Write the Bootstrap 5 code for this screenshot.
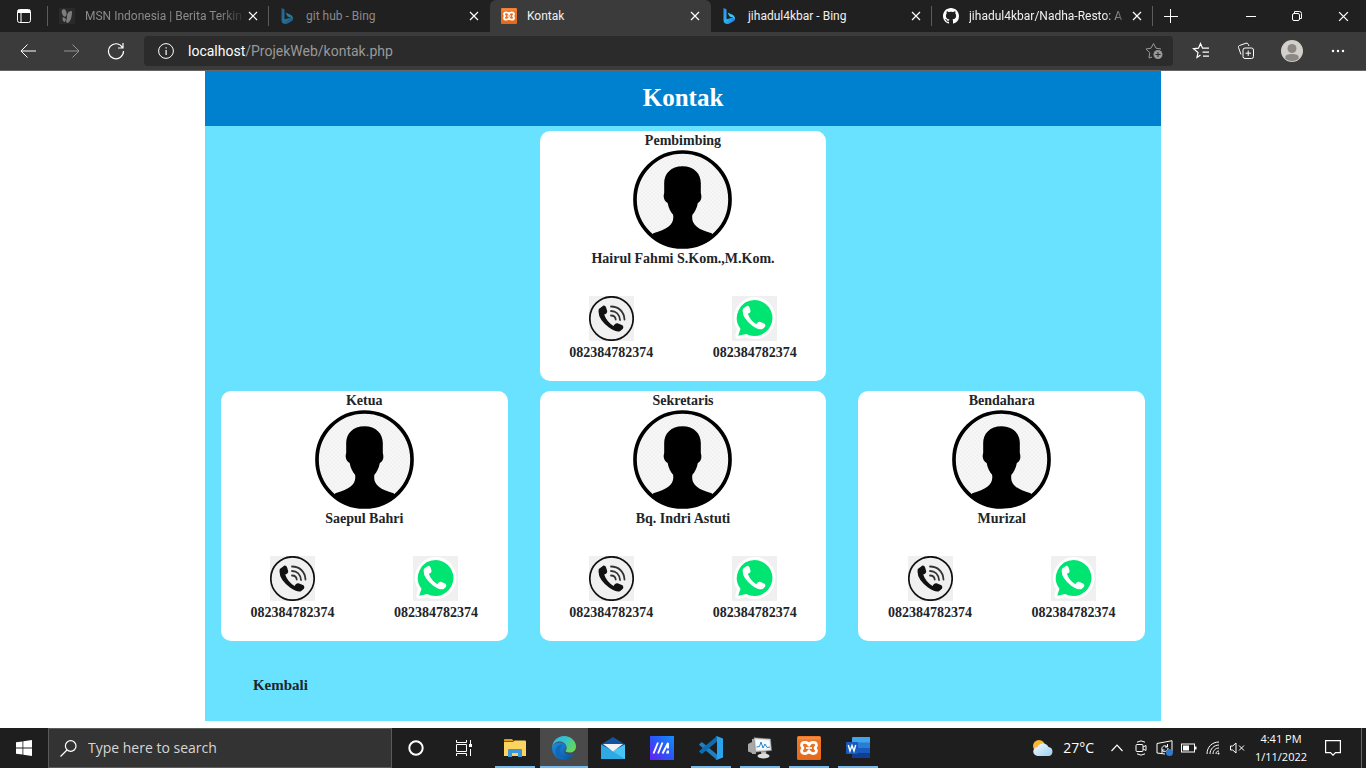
<!DOCTYPE html>
<html lang="id">
<head>
<meta charset="utf-8">
<meta name="viewport" content="width=device-width, initial-scale=1">
<title>Kontak</title>
<link href="https://cdn.jsdelivr.net/npm/bootstrap@5.3.0/dist/css/bootstrap.min.css" rel="stylesheet">
<style>
  body { font-family: "Open Sans", "Noto Sans", sans-serif; font-size: 12px; line-height: 16px; background: #fff; }
  svg { display: block; flex: none; }
  button { border: 0; background: none; padding: 0; color: inherit; }
  .ln { fill: none; stroke: currentColor; }

  /* browser tabs */
  .tabstrip { background: #202020; height: 32px; color: #fff; font-family: Roboto, "Open Sans", sans-serif; }
  .tab-menu { width: 48px; }
  .web-tab { flex: 0 1 221px; min-width: 0; padding-left: 11px; padding-right: 8px; gap: 10px; }
  .web-tab a { color: #f0f0f0; text-decoration: none; }
  .web-tab.asleep a { color: #8a8a8a; }
  .web-tab.asleep svg.fav { opacity: .55; }
  .web-tab.current { background: #3b3b3b; border-radius: 6px 6px 0 0; }
  .web-tab .tab-title { white-space: nowrap; flex: 1 1 0; min-width: 0; }
  .web-tab .faded { -webkit-mask-image: linear-gradient(90deg, #000 86%, rgba(0,0,0,.2)); mask-image: linear-gradient(90deg, #000 86%, rgba(0,0,0,.2)); }
  .tab-rule { width: 1px; height: 20px; background: #5c5c5c; margin-left: -1px; }
  .tab-close { width: 16px; height: 16px; margin-left: -6px; }
  .new-tab { width: 36px; }
  .win-btn { width: 46px; }

  /* address row */
  .toolbar { background: #3b3b3b; height: 39px; border-bottom: 1px solid #666; color: #fff; padding-left: 6px; padding-right: 5px; }
  .tool-btn { width: 44px; height: 30px; }
  .tool-btn.end { width: 46px; }
  .address { background: #2b2b2b; border-radius: 4px; height: 30px; margin: 0 4px 0 6px; padding: 0 10px 0 14px; gap: 14px; }
  .address .url { font-family: Roboto, "Open Sans", sans-serif; font-size: 14px; color: #999; }
  .address .host { color: #fff; }

  /* contact page */
  .page { width: 70%; background: #69e2ff; font-family: "Liberation Serif", "Times New Roman", serif; font-weight: 700; font-size: 14px; line-height: 18px; color: #212529; }
  .page-head { background: #0081cf; color: #fff; height: 55px; font-size: 25px; line-height: 53px; font-weight: 700; }
  .people { --bs-gutter-x: 32px; margin: 0; padding-top: 5px; }
  .people > div { margin-bottom: 10px; }
  .person { background: #fff; border-radius: 10px; min-height: 250px; padding-top: 1px; }
  .person h2, .person p { font-size: 14px; line-height: 18px; font-weight: 700; margin: 0; }
  .person p { line-height: 20px; }
  .reach { margin-top: 27px; }
  .reach a { color: inherit; text-decoration: none; line-height: 24px; }
  .back-row { height: 70px; padding: 25px 48px; font-size: 15px; }
  .back-row a { color: #212529; text-decoration: none; }

  /* taskbar */
  .taskbar { background: #1e1e1e; height: 40px; color: #fff; }
  .task-btn { width: 48px; height: 40px; }
  .find { width: 344px; height: 40px; background: #333; border: 1px solid #5b5b5b; padding-left: 11px; gap: 11px; }
  .find input { background: none; border: 0; outline: 0; padding: 0; color: #d6d6d6; font-size: 14px; line-height: 20px; min-width: 0; }
  .find input::placeholder { color: #d6d6d6; opacity: 1; }
  .apps { margin-left: 3px; gap: 1px; }
  .open-app { background: linear-gradient(#76b9ed, #76b9ed) center bottom / 40px 2px no-repeat; }
  .open-app.front { background-color: #4a4a4a; background-size: 48px 2px; }
  .weather { font-size: 14px; gap: 9px; margin-right: 11px; }
  .tray-btn { width: 24px; height: 40px; }
  .clock { width: 64px; font-size: 11px; line-height: 18px; }
  .notes { width: 40px; margin-right: 8px; }
  .peek { width: 5px; height: 40px; border-left: 1px solid #666; }
</style>
</head>
<body class="d-flex flex-column min-vh-100">

<svg width="0" height="0" class="position-absolute" aria-hidden="true">
  <defs>
    <linearGradient id="gBing" x1="0" y1="0" x2="1" y2="1"><stop offset="0" stop-color="#2b8cf0"/><stop offset=".5" stop-color="#2bb4f2"/><stop offset="1" stop-color="#1f6fe0"/></linearGradient>
    <linearGradient id="gOrange" x1="0" y1="0" x2="0" y2="1"><stop offset="0" stop-color="#ee7a2a"/><stop offset="1" stop-color="#e5681a"/></linearGradient>
    <linearGradient id="gEdgeTop" x1="0" y1="0" x2="1" y2=".5"><stop offset="0" stop-color="#2fb4ea"/><stop offset=".5" stop-color="#35c1d0"/><stop offset="1" stop-color="#63d85a"/></linearGradient>
    <linearGradient id="gEdgeLow" x1="0" y1="0" x2="1" y2="1"><stop offset="0" stop-color="#1b8fe0"/><stop offset="1" stop-color="#0c4f9c"/></linearGradient>
    <linearGradient id="gMa" x1="0" y1="1" x2="1" y2="0"><stop offset="0" stop-color="#6a1cf5"/><stop offset=".5" stop-color="#2b55f8"/><stop offset="1" stop-color="#1290ff"/></linearGradient>
    <linearGradient id="gCloud" x1="0" y1="0" x2="1" y2="1"><stop offset="0" stop-color="#f4fbff"/><stop offset="1" stop-color="#9dcff2"/></linearGradient>
    <pattern id="checks" width="4" height="4" patternUnits="userSpaceOnUse"><rect width="4" height="4" fill="#f8f8f8"/><path d="M0 0h2v2H0zM2 2h2v2H2z" fill="#f0f0f0"/></pattern>
    <clipPath id="round"><circle cx="50" cy="50" r="48"/></clipPath>
  </defs>
  <symbol id="x" viewBox="0 0 10 10"><path class="ln" stroke-width="1.200" d="M1 1l8 8M9 1L1 9"/></symbol>
  <symbol id="bing" viewBox="0 0 16 16"><path fill="url(#gBing)" d="M1.500 0l3 1.200v10L13 9v2c0 1-.5 1.700-1.300 2.200L7 15.700c-3 1-5.500-.7-5.500-3.700z"/><path fill="#35c8f4" d="M5.500 4.500l4.500 2c2 .9 2.700 2 2.700 4v1c-.6-1.400-1.500-1.800-2.700-2.300L7.500 8.400z"/></symbol>
  <symbol id="xampp" viewBox="0 0 24 24"><rect width="24" height="24" rx="1.500" fill="url(#gOrange)"/><path d="M1 1h22v2.500H1z" fill="#f29a5d" opacity=".6"/><path fill="none" stroke="#fff" stroke-width="2.700" stroke-linejoin="round" d="M12 9.300C11 5.600 4.700 5.400 4.500 9.200c0 1.600 1.500 1.800 1.500 2.800s-1.500 1.200-1.500 2.800c.2 3.800 6.500 3.600 7.500-.1 1 3.700 7.300 3.900 7.500.1 0-1.600-1.500-1.800-1.500-2.800s1.500-1.200 1.500-2.800C19.300 5.400 13 5.600 12 9.300z"/><path fill="none" stroke="#fff" stroke-width="1.800" d="M9 12h6"/></symbol>
  <symbol id="avatar" viewBox="0 0 100 100"><circle cx="50" cy="50" r="48" fill="url(#checks)"/><g clip-path="url(#round)"><path d="M50 16.500c-12 0-19 8-18.500 18v9c-1.500 5 .3 8 3.500 10 1 5.500 3 9 5.500 12 1.500 9-5 14.500-20 18.500L14 100h72l-6.500-16c-15-4-21-9.500-19.500-18.500 2.500-3 4.500-6.500 5.500-12 3-2 4.500-5 3-10v-9c.5-10-6.500-18-18.500-18z"/></g><circle cx="50" cy="50" r="48" fill="none" stroke="#000" stroke-width="3.700"/></symbol>
  <symbol id="handset" viewBox="0 0 45 45"><path d="M9.800 13l4.700-3.500q2-.2 2.700 2.300l1 3.500q.2 2.200-3 3.200Q17.500 25.500 24.500 30q1.500-3.300 4-2.700l5 2q1.700 1.500.4 3.500L31 35.300Q27 36.400 20 31.500 9.500 23.500 9.500 15.500z"/></symbol>
  <symbol id="call" viewBox="0 0 45 45"><rect width="45" height="45" fill="#f0f0f0"/><circle cx="22.500" cy="22.500" r="21.700" fill="none" stroke="#111" stroke-width="1.700"/><use href="#handset" width="45" height="45" fill="#111"/><path fill="none" stroke="#333" stroke-width="1.800" stroke-linecap="round" d="M22 10.500c7.500 0 13 5 13.500 13M22 15c5 0 8.500 3.500 9 9M22 19.500c3 0 4.500 2 4.700 4"/></symbol>
  <symbol id="wa" viewBox="0 0 45 45"><rect width="45" height="45" fill="#f0f0f0"/><path fill="#00e472" stroke="#fff" stroke-width="6" stroke-linejoin="round" d="M22.700 4a18 18 0 1 1-8.500 34L6.200 39.800l2.300-7A18 18 0 0 1 22.700 4z"/><path fill="#00e472" d="M22.700 4a18 18 0 1 1-8.500 34L6.200 39.800l2.300-7A18 18 0 0 1 22.700 4z"/><use href="#handset" x="2" y="1" width="41" height="41" fill="#fff"/></symbol>
</svg>

<header>
  <nav class="tabstrip d-flex align-items-center" aria-label="Tab">
    <button class="tab-menu d-flex justify-content-center" aria-label="Menu tab"><svg width="16" height="16" viewBox="0 0 16 16"><rect class="ln" x="1.500" y="1.500" width="13" height="13" rx="2"/><path fill="currentColor" d="M2 2h12v3H2z"/><path class="ln" d="M5 5v9"/></svg></button>
    <div class="tab-rule"></div>
    <div class="web-tab asleep d-flex align-items-center h-100">
      <svg class="fav" width="16" height="16" viewBox="0 0 16 16"><rect width="16" height="16" fill="#333"/><path fill="#ccc" d="M3 2c3-2 5 1 4.500 5L6 9C4 8 2 5 3 2zM13 3c-4 0-5 3-5 6l-1 5 2 1c3-2 4-7 4-12zM4 9l3 2-1 3c-2 0-3-3-2-5z"/></svg>
      <a class="tab-title faded" href="#">MSN Indonesia | Berita Terkin</a>
      <button class="tab-close d-flex align-items-center justify-content-center" aria-label="Tutup"><svg width="10" height="10"><use href="#x"/></svg></button>
    </div>
    <div class="tab-rule"></div>
    <div class="web-tab asleep d-flex align-items-center h-100">
      <svg class="fav" width="16" height="16"><use href="#bing"/></svg>
      <a class="tab-title" href="#">git hub - Bing</a>
      <button class="tab-close d-flex align-items-center justify-content-center" aria-label="Tutup"><svg width="10" height="10"><use href="#x"/></svg></button>
    </div>
    <div class="web-tab current d-flex align-items-center h-100">
      <svg class="fav" width="16" height="16"><use href="#xampp"/></svg>
      <a class="tab-title" href="#" aria-current="page">Kontak</a>
      <button class="tab-close d-flex align-items-center justify-content-center" aria-label="Tutup"><svg width="10" height="10"><use href="#x"/></svg></button>
    </div>
    <div class="web-tab d-flex align-items-center h-100">
      <svg class="fav" width="16" height="16"><use href="#bing"/></svg>
      <a class="tab-title" href="#">jihadul4kbar - Bing</a>
      <button class="tab-close d-flex align-items-center justify-content-center" aria-label="Tutup"><svg width="10" height="10"><use href="#x"/></svg></button>
    </div>
    <div class="tab-rule"></div>
    <div class="web-tab d-flex align-items-center h-100">
      <svg class="fav" width="16" height="16" viewBox="0 0 16 16"><path fill="#fff" d="M8 0C3.580 0 0 3.580 0 8c0 3.540 2.290 6.530 5.470 7.590.4.070.55-.17.55-.38 0-.19-.01-.82-.01-1.490-2.010.37-2.530-.49-2.690-.94-.09-.23-.48-.94-.82-1.130-.28-.15-.68-.52-.01-.53.63-.01 1.080.58 1.230.82.72 1.210 1.870.87 2.330.66.07-.52.28-.87.51-1.070-1.780-.2-3.640-.89-3.640-3.950 0-.87.31-1.590.82-2.150-.08-.2-.36-1.020.08-2.120 0 0 .67-.21 2.200.82.64-.18 1.320-.27 2-.27.68 0 1.360.09 2 .27 1.530-1.040 2.200-.82 2.200-.82.44 1.100.16 1.920.08 2.120.51.56.82 1.270.82 2.150 0 3.070-1.870 3.750-3.650 3.950.29.25.54.73.54 1.480 0 1.070-.01 1.930-.01 2.200 0 .21.15.46.55.38A8.010 8.010 0 0 0 16 8c0-4.420-3.580-8-8-8z"/></svg>
      <a class="tab-title faded" href="#">jihadul4kbar/Nadha-Resto: A</a>
      <button class="tab-close d-flex align-items-center justify-content-center" aria-label="Tutup"><svg width="10" height="10"><use href="#x"/></svg></button>
    </div>
    <div class="tab-rule"></div>
    <button class="new-tab d-flex justify-content-center" aria-label="Tab baru"><svg width="14" height="14" viewBox="0 0 14 14"><path class="ln" d="M6.500 0v14M0 7.500h14"/></svg></button>
    <button class="win-btn d-flex justify-content-center ms-auto" aria-label="Perkecil"><svg width="10" height="10" viewBox="0 0 10 10"><path class="ln" d="M0 5.500h10"/></svg></button>
    <button class="win-btn d-flex justify-content-center" aria-label="Pulihkan"><svg width="10" height="10" viewBox="0 0 10 10"><rect class="ln" x=".5" y="2.500" width="7" height="7" rx="1.500"/><path class="ln" d="M2.500 2V.5h5a2 2 0 0 1 2 2v5H8"/></svg></button>
    <button class="win-btn d-flex justify-content-center" aria-label="Tutup jendela"><svg width="11" height="11"><use href="#x"/></svg></button>
  </nav>

  <div class="toolbar d-flex align-items-center">
    <button class="tool-btn d-flex align-items-center justify-content-center" aria-label="Kembali"><svg width="16" height="14" viewBox="0 0 16 14"><path class="ln" d="M16 7H1M7.500.5L1 7l6.500 6.500"/></svg></button>
    <button class="tool-btn d-flex align-items-center justify-content-center" aria-label="Maju" disabled><svg width="16" height="14" viewBox="0 0 16 14" opacity=".45"><path class="ln" d="M0 7h15M8.500.5L15 7l-6.500 6.500"/></svg></button>
    <button class="tool-btn d-flex align-items-center justify-content-center" aria-label="Muat ulang"><svg width="18" height="18" viewBox="0 0 18 18"><path class="ln" stroke-width="1.200" d="M15.500 5.500A7.500 7.500 0 1 0 16.500 9M16 1v5h-5"/></svg></button>
    <div class="address d-flex align-items-center flex-grow-1">
      <svg width="16" height="16" viewBox="0 0 16 16"><circle class="ln" cx="8" cy="8" r="7.400"/><path fill="currentColor" d="M7.500 7h1.200v5H7.500zM7.500 4.200h1.200v1.400H7.500z"/></svg>
      <div class="url flex-grow-1"><span class="host">localhost</span>/ProjekWeb/kontak.php</div>
      <button aria-label="Tambah favorit"><svg width="18" height="18" viewBox="0 0 18 18" color="#999"><path class="ln" d="M7 15l-3 1 .7-5.200L1 7l5-.8L8.500 1.500 11 6.200l5 .8"/><circle cx="13" cy="12.500" r="4.500" fill="currentColor"/><path stroke="#2b2b2b" d="M10.500 12.500h5M13 10v5"/></svg></button>
    </div>
    <button class="tool-btn end d-flex align-items-center justify-content-center" aria-label="Favorit"><svg width="18" height="18" viewBox="0 0 18 18"><path class="ln" stroke-width="1.200" d="M9.500 13L6 15.500l1-5-4.500-3.700 5-.6L9.500 1.500l2 4.700H18M11.500 10.200H18M12 14.200h6"/></svg></button>
    <button class="tool-btn end d-flex align-items-center justify-content-center" aria-label="Koleksi"><svg width="18" height="18" viewBox="0 0 18 18"><rect class="ln" x="6" y="6" width="10.500" height="10.500" rx="2"/><path class="ln" d="M11.200 8.500v5.500M8.500 11.200H14M4 12.500L1.500 5.500q-.5-1.500 1-2L9 1.200q1.500-.5 2.200 1L12 4"/></svg></button>
    <button class="tool-btn end d-flex align-items-center justify-content-center" aria-label="Profil"><svg width="22" height="22" viewBox="0 0 22 22"><circle cx="11" cy="11" r="11" fill="#d3d0cc"/><circle cx="11" cy="8.500" r="4.500" fill="#8c8884"/><path fill="#8c8884" d="M4.500 19c-1-4 2-5 6.500-5s7.500 1 6.500 5a11 11 0 0 1-13 0z"/></svg></button>
    <button class="tool-btn end d-flex align-items-center justify-content-center" aria-label="Lainnya"><svg width="14" height="4" viewBox="0 0 14 4"><circle cx="2" cy="2" r="1.200" fill="#fff"/><circle cx="7" cy="2" r="1.200" fill="#fff"/><circle cx="12" cy="2" r="1.200" fill="#fff"/></svg></button>
  </div>
</header>

<main class="flex-grow-1">
  <div class="page mx-auto">
    <h1 class="page-head text-center m-0">Kontak</h1>
    <div class="row people text-center">
      <div class="col-4 offset-4">
        <section class="person">
          <h2>Pembimbing</h2>
          <svg class="mx-auto" width="99" height="99"><use href="#avatar"/></svg>
          <p>Hairul Fahmi S.Kom.,M.Kom.</p>
          <div class="reach row g-0">
            <a class="col-6" href="#"><svg class="mx-auto" width="45" height="45"><use href="#call"/></svg>082384782374</a>
            <a class="col-6" href="#"><svg class="mx-auto" width="45" height="45"><use href="#wa"/></svg>082384782374</a>
          </div>
        </section>
      </div>
      <div class="w-100 m-0"></div>
      <div class="col-4">
        <section class="person">
          <h2>Ketua</h2>
          <svg class="mx-auto" width="99" height="99"><use href="#avatar"/></svg>
          <p>Saepul Bahri</p>
          <div class="reach row g-0">
            <a class="col-6" href="#"><svg class="mx-auto" width="45" height="45"><use href="#call"/></svg>082384782374</a>
            <a class="col-6" href="#"><svg class="mx-auto" width="45" height="45"><use href="#wa"/></svg>082384782374</a>
          </div>
        </section>
      </div>
      <div class="col-4">
        <section class="person">
          <h2>Sekretaris</h2>
          <svg class="mx-auto" width="99" height="99"><use href="#avatar"/></svg>
          <p>Bq. Indri Astuti</p>
          <div class="reach row g-0">
            <a class="col-6" href="#"><svg class="mx-auto" width="45" height="45"><use href="#call"/></svg>082384782374</a>
            <a class="col-6" href="#"><svg class="mx-auto" width="45" height="45"><use href="#wa"/></svg>082384782374</a>
          </div>
        </section>
      </div>
      <div class="col-4">
        <section class="person">
          <h2>Bendahara</h2>
          <svg class="mx-auto" width="99" height="99"><use href="#avatar"/></svg>
          <p>Murizal</p>
          <div class="reach row g-0">
            <a class="col-6" href="#"><svg class="mx-auto" width="45" height="45"><use href="#call"/></svg>082384782374</a>
            <a class="col-6" href="#"><svg class="mx-auto" width="45" height="45"><use href="#wa"/></svg>082384782374</a>
          </div>
        </section>
      </div>
    </div>
    <div class="back-row"><a href="#">Kembali</a></div>
  </div>
</main>

<footer class="taskbar d-flex align-items-center">
  <button class="task-btn d-flex align-items-center justify-content-center" aria-label="Start"><svg width="16" height="16" viewBox="0 0 16 16"><path fill="#fff" d="M0 2.300L6.500 1.400v6.200H0zM7.300 1.300L16 0v7.600H7.300zM0 8.400h6.500v6.200L0 13.700zM7.300 8.400H16V16l-8.700-1.300z"/></svg></button>
  <label class="find d-flex align-items-center" for="find"><svg width="17" height="17" viewBox="0 0 17 17" aria-hidden="true"><circle class="ln" cx="10.700" cy="6" r="5.300" stroke-width="1.200"/><path class="ln" stroke-width="1.200" d="M7 10L.5 16.500"/></svg><input id="find" class="flex-grow-1" type="text" placeholder="Type here to search" aria-label="Type here to search"></label>
  <button class="task-btn d-flex align-items-center justify-content-center" aria-label="Cortana"><svg width="16" height="16" viewBox="0 0 16 16"><circle class="ln" cx="8" cy="8" r="6.700" stroke-width="2"/></svg></button>
  <button class="task-btn d-flex align-items-center justify-content-center" aria-label="Task View"><svg width="16" height="16" viewBox="0 0 16 16"><path class="ln" d="M.5 0v2.500h10V0M.5 16v-2.500h10V16M.5 4.500h10v7H.5zM14.500 0v4M14.500 9v7"/><path fill="#fff" d="M13 4h3v3h-3z"/></svg></button>
  <div class="apps d-flex">
    <button class="task-btn open-app d-flex align-items-center justify-content-center" aria-label="File Explorer"><svg width="22" height="18" viewBox="0 0 22 18"><path fill="#e09d10" d="M0 1q0-1 1-1h7l2 2.500H0z"/><path fill="#fbd35f" d="M0 3h9l1.500-1.500H21q1 0 1 1V17H0z"/><path fill="#3d95da" d="M4 18v-7q0-1 1-1h12q1 0 1 1v7h-4v-4H8v4z"/></svg></button>
    <button class="task-btn open-app front d-flex align-items-center justify-content-center" aria-label="Microsoft Edge"><svg width="24" height="24" viewBox="0 0 24 24"><path fill="url(#gEdgeLow)" d="M0 11.500C1 8 4.500 6.500 8 6.500c3.500 0 7 2.500 6.500 5.500-1 1-2 1.500-2 3 0 3 5.500 5 10 2.500C20 22 16 24 12 24 5 24 0 18.500 0 11.500z"/><path fill="#1268b8" d="M8 13c-1 4 2 8.500 6 9.800C8 24.500 3 20 3.500 14.500 4 10.500 7.500 8.300 10.500 9 9 10 8.300 11.500 8 13z"/><path fill="url(#gEdgeTop)" d="M0 11.500C.5 5 5.500 0 12 0c7.500 0 12 5.500 12 10.500 0 4-3 6-6.500 6-3 0-4.500-1-4-1.700.5-.8 1.200-1.500 1.200-3C14.700 8 11 5.500 7.500 5.500 4 5.500 1 8 0 11.500z"/></svg></button>
    <button class="task-btn d-flex align-items-center justify-content-center" aria-label="Mail"><svg width="24" height="22" viewBox="0 0 24 22"><path fill="#13549b" d="M0 7.500L12 0l12 7.500-12 8z"/><path fill="#2fa9e4" d="M0 7.500L12 14 24 7.500V22H0z"/><path fill="#48c5f3" d="M24 7.500V22L9 12.500 12 14z"/><path fill="#f3f3f3" d="M2 7h20l-10 7.500z"/></svg></button>
    <button class="task-btn d-flex align-items-center justify-content-center" aria-label="MyASUS"><svg width="24" height="24" viewBox="0 0 24 24"><rect width="24" height="24" fill="url(#gMa)"/><path fill="none" stroke="#fff" stroke-width="1.900" d="M3.500 17.500L8 6.500M8 17.500l4.500-11M12.500 17.500L18 7v5.500"/><path fill="#fff" d="M17 14.500h2v3h-3z"/></svg></button>
    <button class="task-btn open-app d-flex align-items-center justify-content-center" aria-label="Visual Studio Code"><svg width="24" height="24" viewBox="0 0 24 24"><path fill="#1b80c4" d="M.5 8l1.700-1.500q.7-.5 1.300 0L18 18.500V24L.5 9.300q-.7-.6 0-1.300z"/><path fill="#0f6cb0" d="M.5 16l1.700 1.500q.7.5 1.300 0L18 5.500V0L.5 14.700q-.7.600 0 1.300z"/><path fill="#2ba3ec" d="M17.500 0L24 2.500v19L17.500 24q-1 0-1.500-.6 2 1 2-1.400V2q0-2.400-2-1.400.5-.6 1.500-.6z"/></svg></button>
    <button class="task-btn open-app d-flex align-items-center justify-content-center" aria-label="Pemantau kinerja"><svg width="24" height="22" viewBox="0 0 24 22"><path fill="#a8a8a8" d="M0 7l4-2v11l-4-1.500zM4 2h4v15H4z"/><path fill="#ddd" stroke="#888" stroke-width=".6" d="M6 .8L22.500 2l1 11.500L7.500 15z"/><path fill="#f7fbff" d="M7.500 2.500l13.800 1 .8 9L8.700 13z"/><path fill="none" stroke="#2a86cc" d="M8.500 10l3-.5L13 5l2 6 2-4 2 3.500 3-.5"/><path fill="#bbb" d="M13 14.500h5l.5 3h-5z"/><ellipse cx="15.500" cy="19" rx="6" ry="2.500" fill="#ddd"/></svg></button>
    <button class="task-btn open-app d-flex align-items-center justify-content-center" aria-label="XAMPP"><svg width="24" height="24"><use href="#xampp"/></svg></button>
    <button class="task-btn open-app d-flex align-items-center justify-content-center" aria-label="Word"><svg width="24" height="22" viewBox="0 0 24 22"><path fill="#41a5ee" d="M6 1q0-1 1-1h17v6H6z"/><path fill="#2b7cd3" d="M6 5.500h18V11H6z"/><path fill="#185abd" d="M6 11h18v5.500H6z"/><path fill="#103f91" d="M6 16.500h18V21H6z"/><rect y="5" width="12" height="12" rx="1" fill="#185abd"/><path fill="none" stroke="#fff" stroke-width="1.400" d="M2.300 8l1.700 6 2-5.500L8 14l1.700-6"/></svg></button>
  </div>
  <div class="weather d-flex align-items-center ms-auto"><svg width="21" height="16" viewBox="0 0 21 16"><circle cx="6" cy="6" r="6" fill="#f8b831"/><path fill="url(#gCloud)" d="M5 16a4.500 4.500 0 0 1-.5-9A6 6 0 0 1 15.500 7 4.600 4.600 0 0 1 16 16z"/></svg><span>27°C</span></div>
  <button class="tray-btn d-flex align-items-center justify-content-center" aria-label="Ikon tersembunyi"><svg width="12" height="8" viewBox="0 0 12 8"><path class="ln" stroke-width="1.200" d="M.5 7L6 1.200 11.500 7"/></svg></button>
  <button class="tray-btn d-flex align-items-center justify-content-center" aria-label="Rapat"><svg width="12" height="16" viewBox="0 0 12 16"><rect class="ln" x="1" y="4.500" width="7" height="7" rx="1"/><path class="ln" d="M8 7l3-1.500v5L8 9M2 2.200q4-2.700 8 0M2 13.800q4 2.700 8 0"/></svg></button>
  <button class="tray-btn d-flex align-items-center justify-content-center" aria-label="Sinkronisasi"><svg width="18" height="16" viewBox="0 0 18 16"><path class="ln" d="M1 3.500L16 .7V11M1 3.500V13l8 1M6 10c-1-3 2-5.500 5-3.500M11.500 4v3H9M12 8c0 3-4 5-6 2.500M6 13v-3h2.500"/><circle cx="13.500" cy="12.500" r="3.500" fill="#2f7ad0"/></svg></button>
  <button class="tray-btn d-flex align-items-center justify-content-center" aria-label="Baterai"><svg width="16" height="10" viewBox="0 0 16 10"><rect class="ln" x=".5" y="1" width="13" height="8"/><path fill="#fff" d="M2 2.500h6v5H2zM14 3.500h1.500v3H14z"/></svg></button>
  <button class="tray-btn d-flex align-items-center justify-content-center" aria-label="Wi-Fi"><svg width="14" height="14" viewBox="0 0 14 14"><path class="ln" d="M1 13C1 6 6 1 13 1M4 13c0-5 4-9 9-9M7 13c0-3.500 2.500-6 6-6M10 13c0-2 1-3 3-3"/><circle cx="12.500" cy="12.500" r="1" fill="#fff"/></svg></button>
  <button class="tray-btn d-flex align-items-center justify-content-center" aria-label="Suara"><svg width="15" height="12" viewBox="0 0 15 12"><path class="ln" d="M.5 4h2.200L6 1v10L2.700 8H.5zM9 3.500l5 5M14 3.500l-5 5"/></svg></button>
  <div class="clock text-center"><div>4:41 PM</div><div>1/11/2022</div></div>
  <button class="notes d-flex justify-content-center" aria-label="Notifikasi"><svg width="16" height="16" viewBox="0 0 16 16"><path class="ln" stroke-width="1.200" d="M.6.600h14.800v12H10.500L8 15.200l-2.500-2.600H.6z"/></svg></button>
  <div class="peek"></div>
</footer>

<script src="https://cdn.jsdelivr.net/npm/bootstrap@5.3.0/dist/js/bootstrap.bundle.min.js"></script>
</body>
</html>
